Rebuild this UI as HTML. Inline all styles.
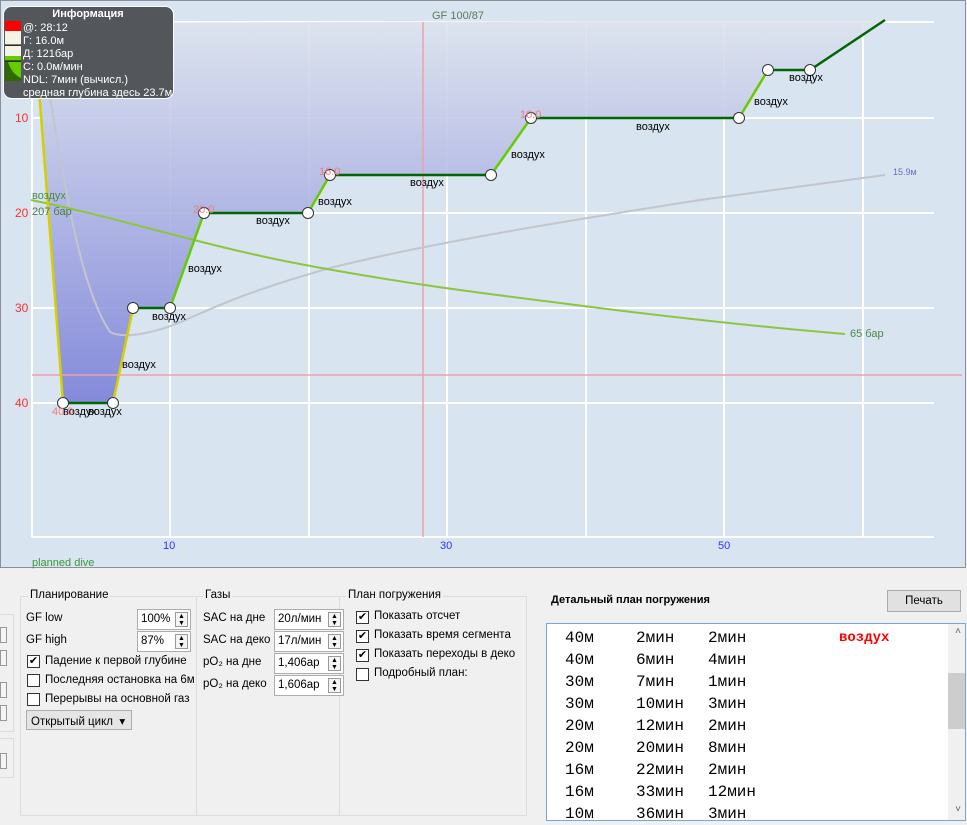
<!DOCTYPE html>
<html><head><meta charset="utf-8"><style>
*{margin:0;padding:0;box-sizing:border-box}
body{width:967px;height:821px;overflow:hidden;background:#f0f0f0;font-family:"Liberation Sans","DejaVu Sans",sans-serif;font-size:11.5px;color:#000;position:relative}
.a{position:absolute;white-space:nowrap}
.sp{position:absolute;background:#fff;border:1px solid #adadad;height:21px;font-size:11.5px;padding:3px 3px}
.sp i{position:absolute;right:2px;top:2px;width:13px;height:15px;border:1px solid #999;background:#f4f4f4;font-style:normal;font-size:7px;line-height:7px;text-align:center}
.cb{position:absolute;width:13px;height:13px;border:1px solid #333;background:#fff;font-size:11px;line-height:11px;text-align:center}
.gb{position:absolute;border:1px solid #dcdcdc}
.t{position:absolute;font-family:"Liberation Mono",monospace;font-size:16px;color:#000}
</style></head><body>
<svg class="a" style="left:0;top:0" width="967" height="570" font-family="Liberation Sans, DejaVu Sans, sans-serif">
<defs><linearGradient id="g" x1="0" y1="23" x2="0" y2="403" gradientUnits="userSpaceOnUse"><stop offset="0" stop-color="#dde3ee"/><stop offset="1" stop-color="#7b80d8"/></linearGradient></defs>
<rect x="0.5" y="0.5" width="965" height="567" fill="#d8e4ef" stroke="#8a8f99"/>
<g stroke="#fff" stroke-width="2">
<line x1="32" y1="22" x2="934" y2="22"/><line x1="32" y1="118" x2="934" y2="118"/><line x1="32" y1="213" x2="934" y2="213"/><line x1="32" y1="308" x2="934" y2="308"/><line x1="32" y1="403" x2="934" y2="403"/><line x1="32" y1="537" x2="934" y2="537"/>
<line x1="32" y1="22" x2="32" y2="537"/><line x1="170" y1="22" x2="170" y2="537"/><line x1="309" y1="22" x2="309" y2="537"/><line x1="447" y1="22" x2="447" y2="537"/><line x1="586" y1="22" x2="586" y2="537"/><line x1="724" y1="22" x2="724" y2="537"/><line x1="863" y1="22" x2="863" y2="537"/>
</g>
<polygon fill="url(#g)" opacity="0.9" points="32,23 63,403 113,403 133,308 170,308 204,213 308,213 330,175 491,175 531,118 739,118 768,70 810,70 885,20"/>
<line x1="423" y1="22" x2="423" y2="537" stroke="#f0a0a8" stroke-width="1.5"/>
<line x1="32" y1="375" x2="962" y2="375" stroke="#f0a0a8" stroke-width="1.5"/>
<path d="M38,25 C60,150 75,280 110,332 C125,340 160,332 190,318 C230,300 260,288 330,268 C430,243 560,222 700,200 C780,189 840,181 885,175" fill="none" stroke="#c2c6cc" stroke-width="2"/>
<path d="M31,200 C120,218 200,245 300,264 C400,283 480,293 560,303 C660,316 760,327 845,334" fill="none" stroke="#8cc63f" stroke-width="2"/>
<g fill="none" stroke-width="2.5">
<path d="M34,23 L63,403" stroke="#d4d000"/><path d="M113,403 L133,308" stroke="#d4d000"/>
<path d="M63,403 L113,403 M133,308 L170,308 M204,213 L308,213 M330,175 L491,175 M531,118 L739,118 M768,70 L810,70 L885,20" stroke="#006600"/>
<path d="M170,308 L204,213 M308,213 L330,175 M491,175 L531,118 M739,118 L768,70" stroke="#66cc00"/>
</g>
<g fill="#fff" stroke="#333"><circle cx="63" cy="403" r="5.5"/><circle cx="113" cy="403" r="5.5"/><circle cx="133" cy="308" r="5.5"/><circle cx="170" cy="308" r="5.5"/><circle cx="204" cy="213" r="5.5"/><circle cx="308" cy="213" r="5.5"/><circle cx="330" cy="175" r="5.5"/><circle cx="491" cy="175" r="5.5"/><circle cx="531" cy="118" r="5.5"/><circle cx="739" cy="118" r="5.5"/><circle cx="768" cy="70" r="5.5"/><circle cx="810" cy="70" r="5.5"/></g>
<g font-size="11" fill="#000">
<text x="63" y="415">воздух</text><text x="88" y="415">воздух</text><text x="122" y="368">воздух</text><text x="152" y="320">воздух</text><text x="188" y="272">воздух</text><text x="256" y="224">воздух</text><text x="318" y="205">воздух</text><text x="410" y="186">воздух</text><text x="511" y="158">воздух</text><text x="636" y="130">воздух</text><text x="754" y="105">воздух</text><text x="789" y="81">воздух</text>
</g>
<g font-size="11" fill="#f47a7a"><text x="52" y="415">40.0</text><text x="193" y="213">20.0</text><text x="319" y="175">16.0</text><text x="520" y="118">10.0</text></g>
<g font-size="12" fill="#ff3030"><text x="15" y="122">10</text><text x="15" y="217">20</text><text x="15" y="312">30</text><text x="15" y="407">40</text></g>
<g font-size="11" fill="#3030ff"><text x="163" y="549">10</text><text x="440" y="549">30</text><text x="718" y="549">50</text></g>
<text x="432" y="19" font-size="11" fill="#5a7a5a">GF 100/87</text>
<text x="32" y="199" font-size="11" fill="#4a8a4a">воздух</text>
<text x="32" y="215" font-size="11" fill="#4a7a4a">207 бар</text>
<text x="850" y="337" font-size="11" fill="#4a8a4a">65 бар</text>
<text x="893" y="175" font-size="9" fill="#6a6ac0">15.9м</text>
<text x="32" y="566" font-size="11" fill="#3a9a3a">planned dive</text>
<rect x="3.5" y="6.5" width="170" height="92" rx="8" fill="#4e5256" stroke="#fff" opacity="0.96"/>
<text x="88" y="17" font-size="11" font-weight="bold" fill="#fff" text-anchor="middle">Информация</text>
<rect x="5" y="21" width="16" height="10" fill="#f00"/><rect x="5" y="31" width="16" height="14" fill="#f4f4e6"/><line x1="5" y1="45" x2="21" y2="45" stroke="#000"/><rect x="5" y="46" width="16" height="10" fill="#f4f4e6"/><rect x="5" y="56" width="16" height="5" fill="#66cc00"/><line x1="5" y1="61" x2="21" y2="61" stroke="#000"/><rect x="5" y="62" width="16" height="19" fill="#2d6a00"/><path d="M8,62 Q12,74 21,78 L21,62Z" fill="#66cc00"/>
<g font-size="11" fill="#fff"><text x="23" y="31">@: 28:12</text><text x="23" y="44">Г: 16.0м</text><text x="23" y="57">Д: 121бар</text><text x="23" y="70">С: 0.0м/мин</text><text x="23" y="83">NDL: 7мин (вычисл.)</text><text x="23" y="96">средная глубина здесь 23.7м</text></g>
</svg>

<div class="gb" style="left:-2px;top:614px;width:16px;height:118px"></div>
<div class="gb" style="left:-2px;top:738px;width:16px;height:40px"></div>
<div class="a" style="left:0;top:627px;width:7px;height:16px;border:1px solid #999;background:#f4f4f4"></div>
<div class="a" style="left:0;top:650px;width:7px;height:16px;border:1px solid #999;background:#f4f4f4"></div>
<div class="a" style="left:0;top:682px;width:7px;height:16px;border:1px solid #999;background:#f4f4f4"></div>
<div class="a" style="left:0;top:705px;width:7px;height:16px;border:1px solid #999;background:#f4f4f4"></div>
<div class="a" style="left:0;top:753px;width:7px;height:16px;border:1px solid #999;background:#f4f4f4"></div>

<div class="gb" style="left:20px;top:596px;width:507px;height:220px"></div>
<div class="a" style="left:196px;top:597px;width:1px;height:218px;background:#dcdcdc"></div>
<div class="a" style="left:339px;top:597px;width:1px;height:218px;background:#dcdcdc"></div>
<div class="a" style="left:28px;top:589px;background:#f0f0f0;padding:0 2px">Планирование</div>
<div class="a" style="left:203px;top:589px;background:#f0f0f0;padding:0 2px">Газы</div>
<div class="a" style="left:346px;top:589px;background:#f0f0f0;padding:0 2px">План погружения</div>

<div class="a" style="left:26px;top:612px">GF low</div>
<div class="sp" style="left:137px;top:609px;width:54px">100%<i>▲<br>▼</i></div>
<div class="a" style="left:26px;top:634px">GF high</div>
<div class="sp" style="left:137px;top:631px;width:54px">87%<i>▲<br>▼</i></div>
<div class="cb" style="left:27px;top:655px">✔</div><div class="a" style="left:45px;top:655px">Падение к первой глубине</div>
<div class="cb" style="left:27px;top:674px"></div><div class="a" style="left:45px;top:674px">Последняя остановка на 6м</div>
<div class="cb" style="left:27px;top:693px"></div><div class="a" style="left:45px;top:693px">Перерывы на основной газ</div>
<div class="a" style="left:26px;top:710px;width:106px;height:20px;border:1px solid #adadad;background:#e5e5e5;padding:3px 4px">Открытый цикл &nbsp;▾</div>

<div class="a" style="left:203px;top:612px">SAC на дне</div>
<div class="sp" style="left:274px;top:609px;width:70px">20л/мин<i>▲<br>▼</i></div>
<div class="a" style="left:203px;top:634px">SAC на деко</div>
<div class="sp" style="left:274px;top:631px;width:70px">17л/мин<i>▲<br>▼</i></div>
<div class="a" style="left:203px;top:656px">pO₂ на дне</div>
<div class="sp" style="left:274px;top:653px;width:70px">1,406ар<i>▲<br>▼</i></div>
<div class="a" style="left:203px;top:678px">pO₂ на деко</div>
<div class="sp" style="left:274px;top:675px;width:70px">1,606ар<i>▲<br>▼</i></div>

<div class="cb" style="left:356px;top:611px">✔</div><div class="a" style="left:374px;top:610px">Показать отсчет</div>
<div class="cb" style="left:356px;top:630px">✔</div><div class="a" style="left:374px;top:629px">Показать время сегмента</div>
<div class="cb" style="left:356px;top:649px">✔</div><div class="a" style="left:374px;top:648px">Показать переходы в деко</div>
<div class="cb" style="left:356px;top:668px"></div><div class="a" style="left:374px;top:667px">Подробный план:</div>

<div class="a" style="left:551px;top:594px;font-weight:bold;font-size:11px">Детальный план погружения</div>
<div class="a" style="left:887px;top:590px;width:74px;height:22px;border:1px solid #adadad;background:#e1e1e1;text-align:center;line-height:20px">Печать</div>
<div class="a" style="left:546px;top:623px;width:420px;height:198px;border:1px solid #7aa7d8;background:#fff;overflow:hidden">
<div class="a" style="right:0;top:0;width:17px;height:198px;background:#f0f0f0"></div>
<div class="a" style="right:0;top:49px;width:17px;height:56px;background:#cdcdcd"></div>
<div class="a" style="right:4px;top:2px;font-size:10px;color:#606060">˄</div>
<div class="a" style="right:4px;top:180px;font-size:10px;color:#606060">˅</div>
</div>
<div class="t" style="left:565px;top:627px;line-height:22px">40м<br>40м<br>30м<br>30м<br>20м<br>20м<br>16м<br>16м<br>10м</div>
<div class="t" style="left:636px;top:627px;line-height:22px">2мин<br>6мин<br>7мин<br>10мин<br>12мин<br>20мин<br>22мин<br>33мин<br>36мин</div>
<div class="t" style="left:708px;top:627px;line-height:22px">2мин<br>4мин<br>1мин<br>3мин<br>2мин<br>8мин<br>2мин<br>12мин<br>3мин</div>
<div class="t" style="left:839px;top:627px;line-height:22px;color:#f00;font-weight:bold;font-size:14px">воздух</div>
</body></html>
